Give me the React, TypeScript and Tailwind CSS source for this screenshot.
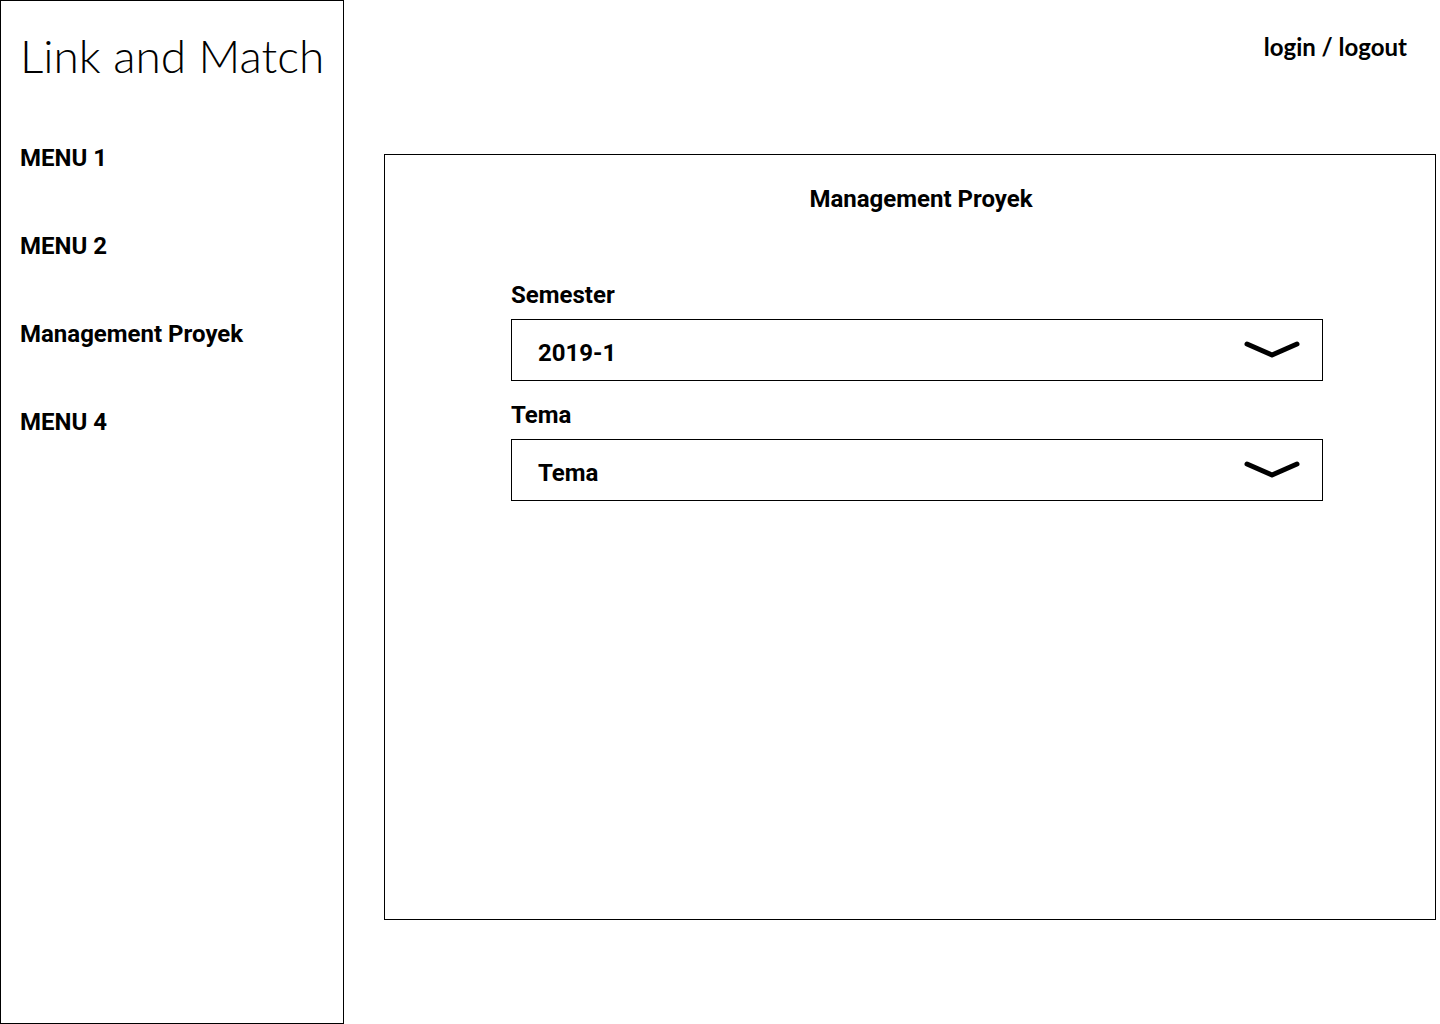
import React from "react";

const roboto = { fontFamily: "Roboto, 'Liberation Sans', sans-serif" };

function Chevron() {
  return (
    <svg width="56" height="20" viewBox="0 0 56 20" className="shrink-0">
      <path d="M3 4 L28 15 L53 4" fill="none" stroke="black" strokeWidth="5" strokeLinecap="round" strokeLinejoin="round" />
    </svg>
  );
}

function Select({ value }: { value: string }) {
  return (
    <div className="flex h-[62px] w-[812px] items-center justify-between border border-black pl-[26px] pr-[22px]">
      <span className="pt-[6px] text-[24px] font-bold leading-none">{value}</span>
      <Chevron />
    </div>
  );
}

export default function App() {
  return (
    <div className="flex h-[1024px] w-[1440px] bg-white text-black" style={roboto}>
      <aside className="flex h-[1024px] w-[344px] shrink-0 flex-col border border-black">
        <h1
          className="pl-[19px] pt-[32px] text-[46px] font-light leading-none"
          style={{ fontFamily: "Lato, 'Open Sans', sans-serif" }}
        >
          Link and Match
        </h1>
        <nav className="mt-[67px] flex flex-col gap-[64px] pl-[19px] text-[24px] font-bold leading-[24px]">
          <div>MENU 1</div>
          <div>MENU 2</div>
          <div>Management Proyek</div>
          <div>MENU 4</div>
        </nav>
      </aside>
      <main className="flex flex-1 flex-col">
        <div
          className="flex justify-end pr-[33px] pt-[35px] text-[24px] font-bold leading-none"
          style={{ fontFamily: "Lato, 'Open Sans', sans-serif" }}
        >
          login / logout
        </div>
        <section className="ml-[40px] mt-[95px] flex h-[766px] w-[1052px] flex-col border border-black">
          <h2 className="mt-[32px] pl-[22px] text-center text-[24px] font-bold leading-[24px]">Management Proyek</h2>
          <div className="mt-[72px] flex flex-col pl-[126px]">
            <label className="text-[24px] font-bold leading-[24px]">Semester</label>
            <div className="mt-[12px]">
              <Select value="2019-1" />
            </div>
            <label className="mt-[22px] text-[24px] font-bold leading-[24px]">Tema</label>
            <div className="mt-[12px]">
              <Select value="Tema" />
            </div>
          </div>
        </section>
      </main>
    </div>
  );
}
